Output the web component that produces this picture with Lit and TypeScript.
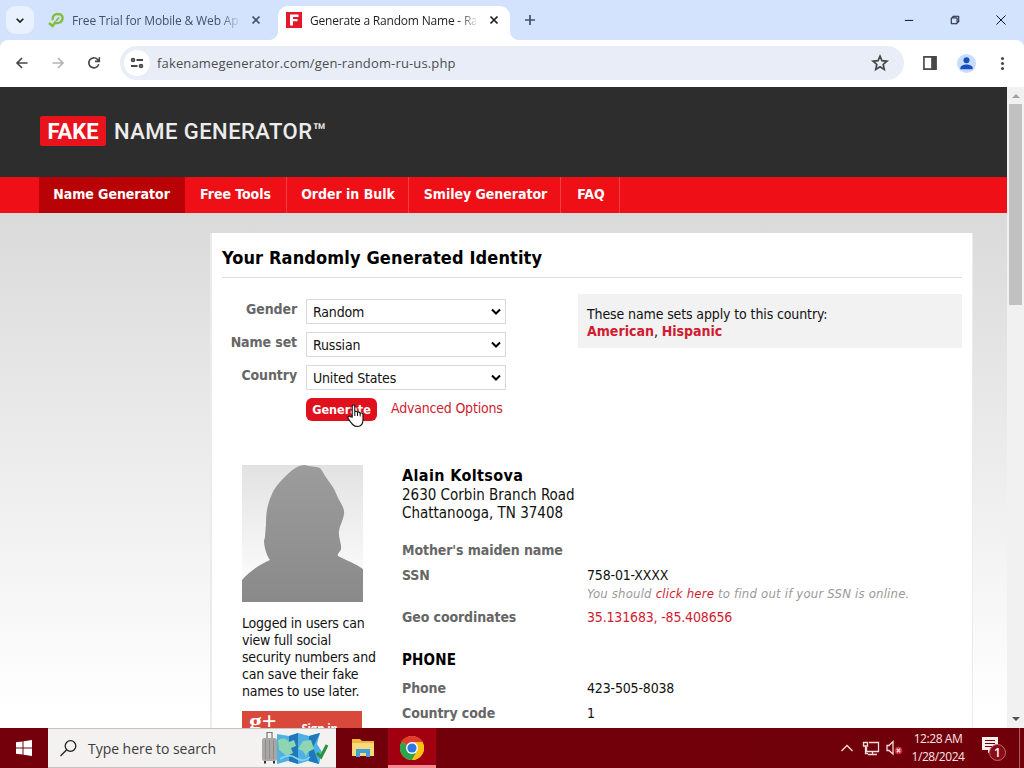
import { LitElement, html, css, svg } from 'lit';
import { customElement, property } from 'lit/decorators.js';

const ICONS = {
  chevron: svg`<path d="M2 4.5 L6 8.5 L10 4.5" fill="none" stroke="currentColor" stroke-width="2"/>`,
  close: svg`<path d="M2.5 2.5 L9.5 9.5 M9.5 2.5 L2.5 9.5" stroke="currentColor" stroke-width="1.7"/>`,
  plus: svg`<path d="M6 1 V11 M1 6 H11" stroke="currentColor" stroke-width="1.7"/>`,
  back: svg`<path d="M11.5 6 H1.5 M6 1 L1 6 L6 11" fill="none" stroke="currentColor" stroke-width="1.6"/>`,
  forward: svg`<path d="M.5 6 H10.5 M6 1 L11 6 L6 11" fill="none" stroke="currentColor" stroke-width="1.6"/>`,
  reload: svg`<path d="M10.7 7.1 A5 5 0 1 1 9.6 2.5 L11 4 M11.3 .2 V4.4 H7" fill="none" stroke="currentColor" stroke-width="1.6"/>`,
  tune: svg`<g fill="none" stroke="currentColor" stroke-width="1.8"><circle cx="2" cy="3" r="1.4"/><path d="M5.5 3 H12 M0 9 H6.5"/><circle cx="10" cy="9" r="1.4"/></g>`,
  star: svg`<path d="M6 .9 L7.5 4.3 L11.2 4.7 L8.4 7.1 L9.2 10.8 L6 8.9 L2.8 10.8 L3.6 7.1 L.8 4.7 L4.5 4.3 Z" fill="none" stroke="currentColor" stroke-width="1.3"/>`,
  panel: svg`<path d="M.8 .8 H11.2 V11.2 H.8 Z" fill="none" stroke="currentColor" stroke-width="1.4"/><path d="M7 .8 H11.2 V11.2 H7 Z" fill="currentColor"/>`,
  person: svg`<circle cx="6" cy="6" r="6" fill="#c8ddfb"/><circle cx="6" cy="4" r="1.9" fill="#174fc0"/><path d="M2.1 9.7 V8.8 C2.1 7.4 4.2 6.6 6 6.6 S9.9 7.4 9.9 8.8 V9.7 Z" fill="#174fc0"/>`,
  dots: svg`<g fill="currentColor"><circle cx="6" cy="1.3" r="1.4"/><circle cx="6" cy="6" r="1.4"/><circle cx="6" cy="10.7" r="1.4"/></g>`,
  minimize: svg`<path d="M1 6.5 H11" stroke="currentColor" stroke-width="1.2"/>`,
  restore: svg`<path d="M1.5 3.5 H8.5 V10.5 H1.5 Z M3.5 3.5 V1.5 H10.5 V8.5 H8.5" fill="none" stroke="currentColor" stroke-width="1.2"/>`,
  exit: svg`<path d="M.5 .5 L11.5 11.5 M11.5 .5 L.5 11.5" stroke="currentColor" stroke-width="1.2"/>`,
};

@customElement('ui-icon')
export class UiIcon extends LitElement {
  @property() name: keyof typeof ICONS = 'close';

  static styles = css`
    :host {
      display: inline-block;
      flex: none;
      width: 12px;
      height: 12px;
    }
    svg {
      display: block;
      width: 100%;
      height: 100%;
      overflow: visible;
    }
  `;

  render() {
    return html`<svg viewBox="0 0 12 12">${ICONS[this.name]}</svg>`;
  }
}

@customElement('browser-chrome')
export class BrowserChrome extends LitElement {
  static styles = css`
    :host {
      display: block;
      flex: none;
      font-family: 'Open Sans', 'Noto Sans', sans-serif;
      color: #1f1f1f;
    }
    .tabs {
      display: flex;
      height: 40px;
      background: #d3e3fd;
    }
    .search-tabs {
      display: grid;
      place-items: center;
      width: 28px;
      height: 28px;
      margin: 6px 0 0 6px;
      border-radius: 9px;
      background: #e9f0fe;
    }
    .search-tabs ui-icon {
      width: 10px;
      height: 10px;
    }
    .tab {
      display: flex;
      align-items: center;
      box-sizing: border-box;
      height: 34px;
      margin-top: 6px;
      padding-bottom: 6px;
      font-size: 12px;
    }
    .tab.idle {
      width: 244px;
      padding-left: 14px;
      color: #41506b;
    }
    .tab.active {
      position: relative;
      width: 232px;
      padding-left: 8px;
      border-radius: 10px 10px 0 0;
      background: #fff;
    }
    /* flared feet of the selected tab */
    .tab.active::before,
    .tab.active::after {
      content: '';
      position: absolute;
      bottom: 0;
      left: -8px;
      width: 8px;
      height: 8px;
      background: radial-gradient(circle at 0 0, transparent 7.5px, #fff 8px);
    }
    .tab.active::after {
      left: 232px;
      background: radial-gradient(circle at 100% 0, transparent 7.5px, #fff 8px);
    }
    .tab svg {
      flex: none;
    }
    .title {
      width: 166px;
      margin: 1px 12px 0 8px;
      line-height: 18px;
      white-space: nowrap;
      letter-spacing: -0.2px;
      mask-image: linear-gradient(90deg, #000 148px, transparent 170px);
    }
    .idle .title {
      margin-left: 7px;
      letter-spacing: -0.14px;
    }
    .new-tab {
      margin: 14px 0 0 14px;
      color: #41506b;
    }
    .window {
      display: flex;
      gap: 36px;
      margin: 15px 18px 0 auto;
      color: #101828;
    }
    .window ui-icon {
      width: 10px;
      height: 10px;
    }
    .toolbar {
      display: flex;
      align-items: center;
      box-sizing: border-box;
      height: 47px;
      padding: 0 16px 1px 16px;
      border-radius: 8px 8px 0 0;
      color: #474747;
      background: #fff;
    }
    .strip {
      background: #d3e3fd;
    }
    .nav {
      display: flex;
      gap: 24px;
      width: 104px;
    }
    .off {
      color: #b4b4b4;
    }
    .address {
      display: flex;
      align-items: center;
      box-sizing: border-box;
      width: 784px;
      height: 34px;
      padding: 0 16px 0 4px;
      border-radius: 17px;
      background: #e9edf8;
      font-size: 13px;
    }
    .site {
      display: grid;
      place-items: center;
      width: 26px;
      height: 26px;
      margin-right: 7px;
      border-radius: 50%;
      background: #fff;
    }
    .url {
      flex: 1;
      letter-spacing: 0.15px;
      color: #4b4d52;
    }
    .star {
      width: 16px;
      height: 16px;
    }
    .panel {
      width: 14px;
      height: 14px;
      margin-left: 19px;
    }
    .avatar {
      width: 19px;
      height: 19px;
      margin-left: 20px;
    }
    .more {
      width: 13px;
      height: 13px;
      margin-left: auto;
      margin-right: -1px;
    }
  `;

  render() {
    return html`
      <div class="tabs">
        <div class="search-tabs"><ui-icon name="chevron"></ui-icon></div>
        <div class="tab idle">
          <svg width="17" height="17" viewBox="0 0 17 17" fill="none" stroke="#83bd3d">
            <path d="M1 11 L4.5 14 L8 9.5" stroke-width="2.6" />
            <path d="M4.7 8.3 C4 4 6.5 2 10 2 C13.5 2 15 4.5 14.5 7 C14 10 10.5 12 6.5 10.8" stroke-width="2.4" />
            <path d="M8 9 L11 5.5" stroke-width="1.8" />
          </svg>
          <span class="title">Free Trial for Mobile &amp; Web Ap</span>
          <ui-icon name="close"></ui-icon>
        </div>
        <div class="tab active">
          <svg width="16" height="16" viewBox="0 0 16 16">
            <path d="M0 0 H16 V16 H0 Z" fill="#e3182b" />
            <path d="M4 2.5 H12.5 V5 H7 V7 H11.5 V9.3 H7 V13.5 H4 Z" fill="#fff" />
          </svg>
          <span class="title">Generate a Random Name - Ra</span>
          <ui-icon name="close"></ui-icon>
        </div>
        <ui-icon class="new-tab" name="plus"></ui-icon>
        <div class="window">
          <ui-icon name="minimize"></ui-icon>
          <ui-icon name="restore"></ui-icon>
          <ui-icon name="exit"></ui-icon>
        </div>
      </div>
      <div class="strip">
        <div class="toolbar">
          <div class="nav">
            <ui-icon name="back"></ui-icon>
            <ui-icon name="forward" class="off"></ui-icon>
            <ui-icon name="reload"></ui-icon>
          </div>
          <div class="address">
            <span class="site"><ui-icon name="tune"></ui-icon></span>
            <span class="url">fakenamegenerator.com/gen-random-ru-us.php</span>
            <ui-icon class="star" name="star"></ui-icon>
          </div>
          <ui-icon class="panel" name="panel"></ui-icon>
          <ui-icon class="avatar" name="person"></ui-icon>
          <ui-icon class="more" name="dots"></ui-icon>
        </div>
      </div>
    `;
  }
}

@customElement('name-page')
export class NamePage extends LitElement {
  static styles = css`
    :host {
      display: block;
      flex: 1;
      min-width: 0;
      overflow: hidden;
      background: linear-gradient(#dadada, #fff 500px) 0 126px no-repeat #fff;
      font: 14px/17px 'DejaVu Sans Condensed', 'DejaVu Sans', sans-serif;
      font-stretch: semi-condensed;
      letter-spacing: -0.17px;
      color: #111;
    }
    a {
      color: #cf1c30;
    }
    header {
      display: flex;
      align-items: center;
      box-sizing: border-box;
      height: 90px;
      padding: 0 0 2px 40px;
      background: #2d2d2d;
      font: 500 22px/30px Roboto, sans-serif;
      color: #ececec;
    }
    .fake {
      box-sizing: border-box;
      width: 66px;
      height: 30px;
      margin-right: 8px;
      border-radius: 2px;
      background: #e9131d;
      font-weight: 700;
      line-height: 32px;
      letter-spacing: 0;
      text-align: center;
      color: #fff;
    }
    .brand {
      padding-top: 2px;
      letter-spacing: 0.45px;
    }
    nav {
      display: flex;
      height: 36px;
      padding-left: 39px;
      background: #ef0f16;
      font-weight: 700;
      line-height: 34px;
      letter-spacing: -0.03px;
      color: #fff;
    }
    nav span {
      box-sizing: border-box;
      padding-left: 1px;
      border-right: 1px solid #f63f44;
      text-align: center;
      white-space: nowrap;
    }
    nav span:nth-child(1) {
      width: 146px;
      padding: 0 1px 0 0;
      border: 0;
      background: #b80205;
    }
    nav span:nth-child(2) {
      width: 102px;
      padding: 0;
    }
    nav span:nth-child(3) {
      width: 122px;
    }
    nav span:nth-child(4) {
      width: 152px;
      padding-left: 2px;
    }
    nav span:nth-child(5) {
      width: 59px;
      padding-left: 2px;
    }
    main {
      box-sizing: border-box;
      width: 763px;
      height: 600px;
      margin: 20px 0 0 210px;
      padding: 0 10px;
      border: solid rgba(0, 0, 0, 0.08);
      border-width: 0 1px 0 2px;
      background: #fff;
    }
    h1 {
      height: 44px;
      margin: 0;
      border-bottom: 1px solid #ddd;
      font-size: 18px;
      line-height: 49px;
      letter-spacing: 0.13px;
      color: #000;
    }
    .top {
      display: flex;
      justify-content: space-between;
      align-items: flex-start;
      height: 187px;
      padding-top: 16px;
      box-sizing: border-box;
    }
    form {
      display: grid;
      grid-template-columns: 75px 200px;
      grid-auto-rows: 25px;
      gap: 8px 9px;
      padding-top: 5px;
    }
    label {
      font-weight: 700;
      line-height: 20px;
      letter-spacing: -0.1px;
      text-align: right;
      white-space: nowrap;
      color: #666;
    }
    .select {
      display: flex;
      align-items: center;
      justify-content: space-between;
      padding: 1px 3px 0 6px;
      border: 1px solid #d9d9d9;
    }
    .select ui-icon {
      margin-bottom: 3px;
      color: #000;
    }
    .actions {
      grid-column: 2;
      display: flex;
      position: relative;
      gap: 14px;
      white-space: nowrap;
      line-height: 20px;
      letter-spacing: -0.2px;
    }
    .generate {
      width: 71px;
      height: 23px;
      border-radius: 6px;
      background: #e0101c;
      font-size: 12.5px;
      font-weight: 700;
      line-height: 23px;
      letter-spacing: 0;
      text-align: center;
      color: #fff;
    }
    .hand {
      position: absolute;
      left: 41px;
      top: 6px;
    }
    .notice {
      box-sizing: border-box;
      width: 384px;
      height: 54px;
      padding: 12px 9px 0;
      background: #f2f2f2;
      letter-spacing: -0.12px;
    }
    .notice b {
      letter-spacing: 0;
    }
    .identity {
      display: flex;
      padding-left: 20px;
    }
    aside {
      width: 160px;
      letter-spacing: -0.2px;
    }
    aside p {
      width: 145px;
      margin: 13px 0 11px;
      white-space: nowrap;
    }
    .photo {
      display: block;
    }
    .google {
      display: flex;
      box-sizing: border-box;
      width: 120px;
      height: 36px;
      padding-left: 7px;
      background: #d8493b;
      font: 700 26px/22px 'Liberation Serif', serif;
      color: #fff;
    }
    .google span {
      margin-left: 25px;
      font: 700 11.5px/35px 'Open Sans', sans-serif;
    }
    .address {
      height: 64px;
      font-size: 15px;
      line-height: 18px;
      letter-spacing: 0;
    }
    .address b {
      display: block;
      font-size: 16px;
      line-height: 21px;
      letter-spacing: 0.38px;
      color: #000;
    }
    dl {
      display: grid;
      grid-template-columns: 185px auto;
      grid-template-rows: 25px 42px 30px 41px 25px 25px;
      margin: 0;
      padding-top: 12px;
      line-height: 19px;
      white-space: nowrap;
    }
    dt {
      font-weight: 700;
      letter-spacing: -0.1px;
      color: #666;
    }
    dd {
      margin: 0;
    }
    dt.section {
      grid-column: span 2;
      padding-top: 13px;
      font-size: 15px;
      letter-spacing: 0.2px;
      color: #000;
    }
    .hint {
      display: block;
      font-size: 13px;
      font-style: italic;
      line-height: 18px;
      letter-spacing: 0.2px;
      color: #999;
    }
  `;

  render() {
    return html`
      <header><span class="fake">FAKE</span><span class="brand">NAME GENERATOR™</span></header>
      <nav>
        <span>Name Generator</span><span>Free Tools</span><span>Order in Bulk</span>
        <span>Smiley Generator</span><span>FAQ</span>
      </nav>
      <main>
        <h1>Your Randomly Generated Identity</h1>
        <div class="top">
          <form>
            <label>Gender</label>
            <div class="select">Random<ui-icon name="chevron"></ui-icon></div>
            <label>Name set</label>
            <div class="select">Russian<ui-icon name="chevron"></ui-icon></div>
            <label>Country</label>
            <div class="select">United States<ui-icon name="chevron"></ui-icon></div>
            <div class="actions">
              <span class="generate">Generate</span>
              <a>Advanced Options</a>
              <svg class="hand" width="18" height="24" viewBox="0 0 18 24">
                <path
                  d="M5.2 13 V2.3 C5.2 .6 7.8 .6 7.8 2.3 V8 C8 7 10.4 7 10.5 8.6 C11 7.7 13 7.9 13.2 9.3 C14 8.6 16 9 16 10.8 V15.5 C16 19.5 14 22.5 10.5 22.5 C6.5 22.5 5 20 1.2 14.5 C.3 12.8 2 11.5 3.3 12.7 Z"
                  fill="#fff" stroke="#111" stroke-width="1.1" />
                <path d="M7.8 8 V12 M10.5 8.6 V12 M13.2 9.3 V12.4" stroke="#111" />
              </svg>
            </div>
          </form>
          <div class="notice">
            These name sets apply to this country:<br />
            <a><b>American</b></a>, <a><b>Hispanic</b></a>
          </div>
        </div>
        <div class="identity">
          <aside>
            <svg class="photo" width="121" height="137" viewBox="0 0 121 137">
              <defs>
                <linearGradient id="bg" x2="0" y2="1">
                  <stop stop-color="#e2e2e2" /><stop offset=".8" stop-color="#fafafa" />
                </linearGradient>
                <linearGradient id="fg" x2="0" y2="1">
                  <stop stop-color="#9c9c9c" /><stop offset="1" stop-color="#8a8a8a" />
                </linearGradient>
              </defs>
              <path d="M0 0 H121 V137 H0 Z" fill="url(#bg)" />
              <path
                d="M0 137 V115 C8 106 17 100 28 95 C24 90 22 80 22 76 C24 70 23 65 24 60 C24 48 25 40 30 29 C33 22 40 14 48 7 C53 3 57 0 63 0 C68 2 74 1 78 3 C81 7 84 13 88 18 C92 23 94 28 96 33 C99 38 103 44 102 49 C101 56 98 60 97 66 C96 72 100 80 99 84 C98 88 95 88 96 91 C106 96 114 99 121 104 V137 Z"
                fill="url(#fg)" />
            </svg>
            <p>
              Logged in users can<br />view full social<br />security numbers and<br />can save their
              fake<br />names to use later.
            </p>
            <div class="google">g+<span>Sign in</span></div>
          </aside>
          <section>
            <div class="address"><b>Alain Koltsova</b>2630 Corbin Branch Road<br />Chattanooga, TN 37408</div>
            <dl>
              <dt>Mother's maiden name</dt>
              <dd></dd>
              <dt>SSN</dt>
              <dd>
                758-01-XXXX
                <span class="hint">You should <a>click here</a> to find out if your SSN is online.</span>
              </dd>
              <dt>Geo coordinates</dt>
              <dd><a>35.131683, -85.408656</a></dd>
              <dt class="section">PHONE</dt>
              <dt>Phone</dt>
              <dd>423-505-8038</dd>
              <dt>Country code</dt>
              <dd>1</dd>
            </dl>
          </section>
        </div>
      </main>
    `;
  }
}

@customElement('task-bar')
export class TaskBar extends LitElement {
  static styles = css`
    :host {
      display: flex;
      flex: none;
      height: 40px;
      background: linear-gradient(90deg, #73000a, #6f0009);
      font-family: 'Open Sans', 'Noto Sans', sans-serif;
      color: #fbe4e4;
    }
    .start {
      display: grid;
      place-items: center;
      width: 48px;
    }
    .search {
      display: flex;
      align-items: center;
      box-sizing: border-box;
      width: 288px;
      padding-left: 12px;
      border: solid #c9c2c2;
      border-width: 1px 0;
      background: #f4f2f1;
      font-size: 14px;
      color: #3c3c3c;
    }
    .search span {
      flex: 1;
      margin-left: 11px;
      letter-spacing: -0.04px;
    }
    .app {
      display: grid;
      place-items: center;
      box-sizing: border-box;
      width: 48px;
      margin-left: 3px;
    }
    .app.current {
      margin-left: 1px;
      padding-top: 2px;
      border-bottom: 3px solid #f08a92;
      background: #a00010;
    }
    .tray {
      display: flex;
      align-items: center;
      margin-left: auto;
    }
    .clock {
      width: 64px;
      margin: -1px 12px 0 3px;
      font-size: 12px;
      line-height: 18px;
      letter-spacing: -0.42px;
      text-align: center;
      white-space: nowrap;
    }
    .badge {
      margin-top: 2px;
    }
    .edge {
      align-self: stretch;
      width: 4px;
      margin-left: 12px;
      border-left: 1px solid #a85a5f;
    }
  `;

  render() {
    return html`
      <div class="start">
        <svg width="16" height="16" viewBox="0 0 16 16" fill="#fff">
          <path d="M0 2.3 L6.5 1.4 V7.5 H0 Z M7.5 1.2 L16 0 V7.5 H7.5 Z M0 8.5 H6.5 V14.6 L0 13.7 Z M7.5 8.5 H16 V16 L7.5 14.8 Z" />
        </svg>
      </div>
      <div class="search">
        <svg width="17" height="17" viewBox="0 0 17 17" fill="none" stroke="#222" stroke-width="1.3">
          <circle cx="10.5" cy="6" r="5.3" />
          <path d="M6.7 9.8 L.5 16" />
        </svg>
        <span>Type here to search</span>
        <svg width="74" height="36" viewBox="0 0 74 36">
          <path d="M15 4 L27 6 L36 3 L47 6 L58 3 L55 14 L60 22 L57 34 L46 31 L36 34 L26 31 L15 34 Z" fill="#4fb0e4" />
          <path d="M27 6 L36 3 V34 L27 31 Z M47 6 L58 3 L51 17 L57 34 L47 31 Z" fill="#1f78b8" />
          <path d="M16 10 Q23 6 27 12 L32 10 L34 16 L29 18 L31 23 L25 26 L17 20 Z M36 19 L41 11 L49 10 L52 19 L46 22 L44 26 L41 21 Z" fill="#8ed6b2" />
          <path d="M18 29 Q27 23 34 28 T48 27" fill="none" stroke="#8fd4f4" stroke-width="1.6" />
          <path d="M5 9 V2.5 H10 V9" fill="none" stroke="#777" stroke-width="1.2" />
          <rect x="0" y="8" width="15" height="23" rx="2.5" fill="#a9a7a4" />
          <path d="M3.5 10 V29 M7.5 10 V29 M11.5 10 V29" stroke="#8e8b89" stroke-width="1" />
          <path d="M3 31 V33.5 M12 31 V33.5" stroke="#333" stroke-width="2" />
          <path d="M55 23 L59 27 L65 15" fill="none" stroke="#28943a" stroke-width="3" />
        </svg>
      </div>
      <div class="app">
        <svg width="22" height="18" viewBox="0 0 22 18">
          <path d="M0 0 H8 L10 2 H22 V17 H0 Z" fill="#eeb83e" />
          <path d="M0 4 H22 V17 H0 Z" fill="#fbd97a" />
          <path d="M4 18 V10 H18 V18 H14 V14 H8 V18 Z" fill="#3f9fd8" />
        </svg>
      </div>
      <div class="app current">
        <svg width="24" height="24" viewBox="0 0 24 24">
          <circle cx="12" cy="12" r="12" fill="#fbc116" />
          <path d="M12 12 L1.6 6 A12 12 0 0 1 22.4 6 Z" fill="#e33b2e" />
          <path d="M12 12 L1.6 6 A12 12 0 0 0 12 24 L17 15 Z" fill="#2da44e" />
          <path d="M12 6 H22.4 A12 12 0 0 1 12 24 L17.2 15 Z" fill="#fbc116" />
          <circle cx="12" cy="12" r="6" fill="#fff" />
          <circle cx="12" cy="12" r="4.6" fill="#2f74e0" />
        </svg>
      </div>
      <div class="tray">
        <svg width="62" height="20" viewBox="0 0 62 20" fill="none" stroke="#f7dcdc" stroke-width="1.3">
          <path d="M.5 13 L6 7.5 L11.5 13" />
          <path d="M28 4.5 H37.5 V13.5 H25.5 V9 M31.5 13.5 V16.5 M27 16.5 H36 M22.5 4.5 H26.5 V8 H22.5 Z M24.5 8 V15.5 H27" />
          <path d="M46 7.5 H48 L52 3.5 V16 L48 12.5 H46 Z" />
          <circle cx="57.5" cy="12.5" r="3.8" fill="#d8283a" stroke="none" />
          <path d="M55.8 10.8 L59.2 14.2 M59.2 10.8 L55.8 14.2" />
        </svg>
        <div class="clock">12:28 AM<br />1/28/2024</div>
        <svg class="badge" width="25" height="26" viewBox="0 0 25 26">
          <path d="M0 1 H16 V14 H9 L6 17.5 V14 H0 Z" fill="#fdeeee" />
          <path d="M3 4.5 H13 M3 7.5 H13 M3 10.5 H10" stroke="#70000a" stroke-width="1.2" />
          <circle cx="15.5" cy="16.5" r="8" fill="#8a0a18" stroke="#c26a70" />
          <text x="15.5" y="21" text-anchor="middle" font-size="12" font-weight="600" fill="#fff">1</text>
        </svg>
        <div class="edge"></div>
      </div>
    `;
  }
}

@customElement('app-root')
export class AppRoot extends LitElement {
  static styles = css`
    :host {
      display: flex;
      flex-direction: column;
      width: 1024px;
      height: 768px;
      overflow: hidden;
      background: #fff;
    }
    .viewport {
      display: flex;
      flex: 1;
      min-height: 0;
    }
    .scroll {
      display: flex;
      flex-direction: column;
      align-items: center;
      width: 17px;
      background: #f1f1f1;
    }
    .thumb {
      width: 13px;
      height: 201px;
      background: #c1c1c1;
    }
    .up,
    .down {
      border: 4px solid transparent;
      border-top-width: 0;
      border-bottom-color: #a3a3a3;
      margin: 7px 0 6px;
    }
    .down {
      margin: auto 0 7px;
      border-width: 4px 4px 0;
      border-color: #505050 transparent transparent;
    }
  `;

  render() {
    return html`
      <browser-chrome></browser-chrome>
      <div class="viewport">
        <name-page></name-page>
        <div class="scroll">
          <div class="up"></div>
          <div class="thumb"></div>
          <div class="down"></div>
        </div>
      </div>
      <task-bar></task-bar>
    `;
  }
}
